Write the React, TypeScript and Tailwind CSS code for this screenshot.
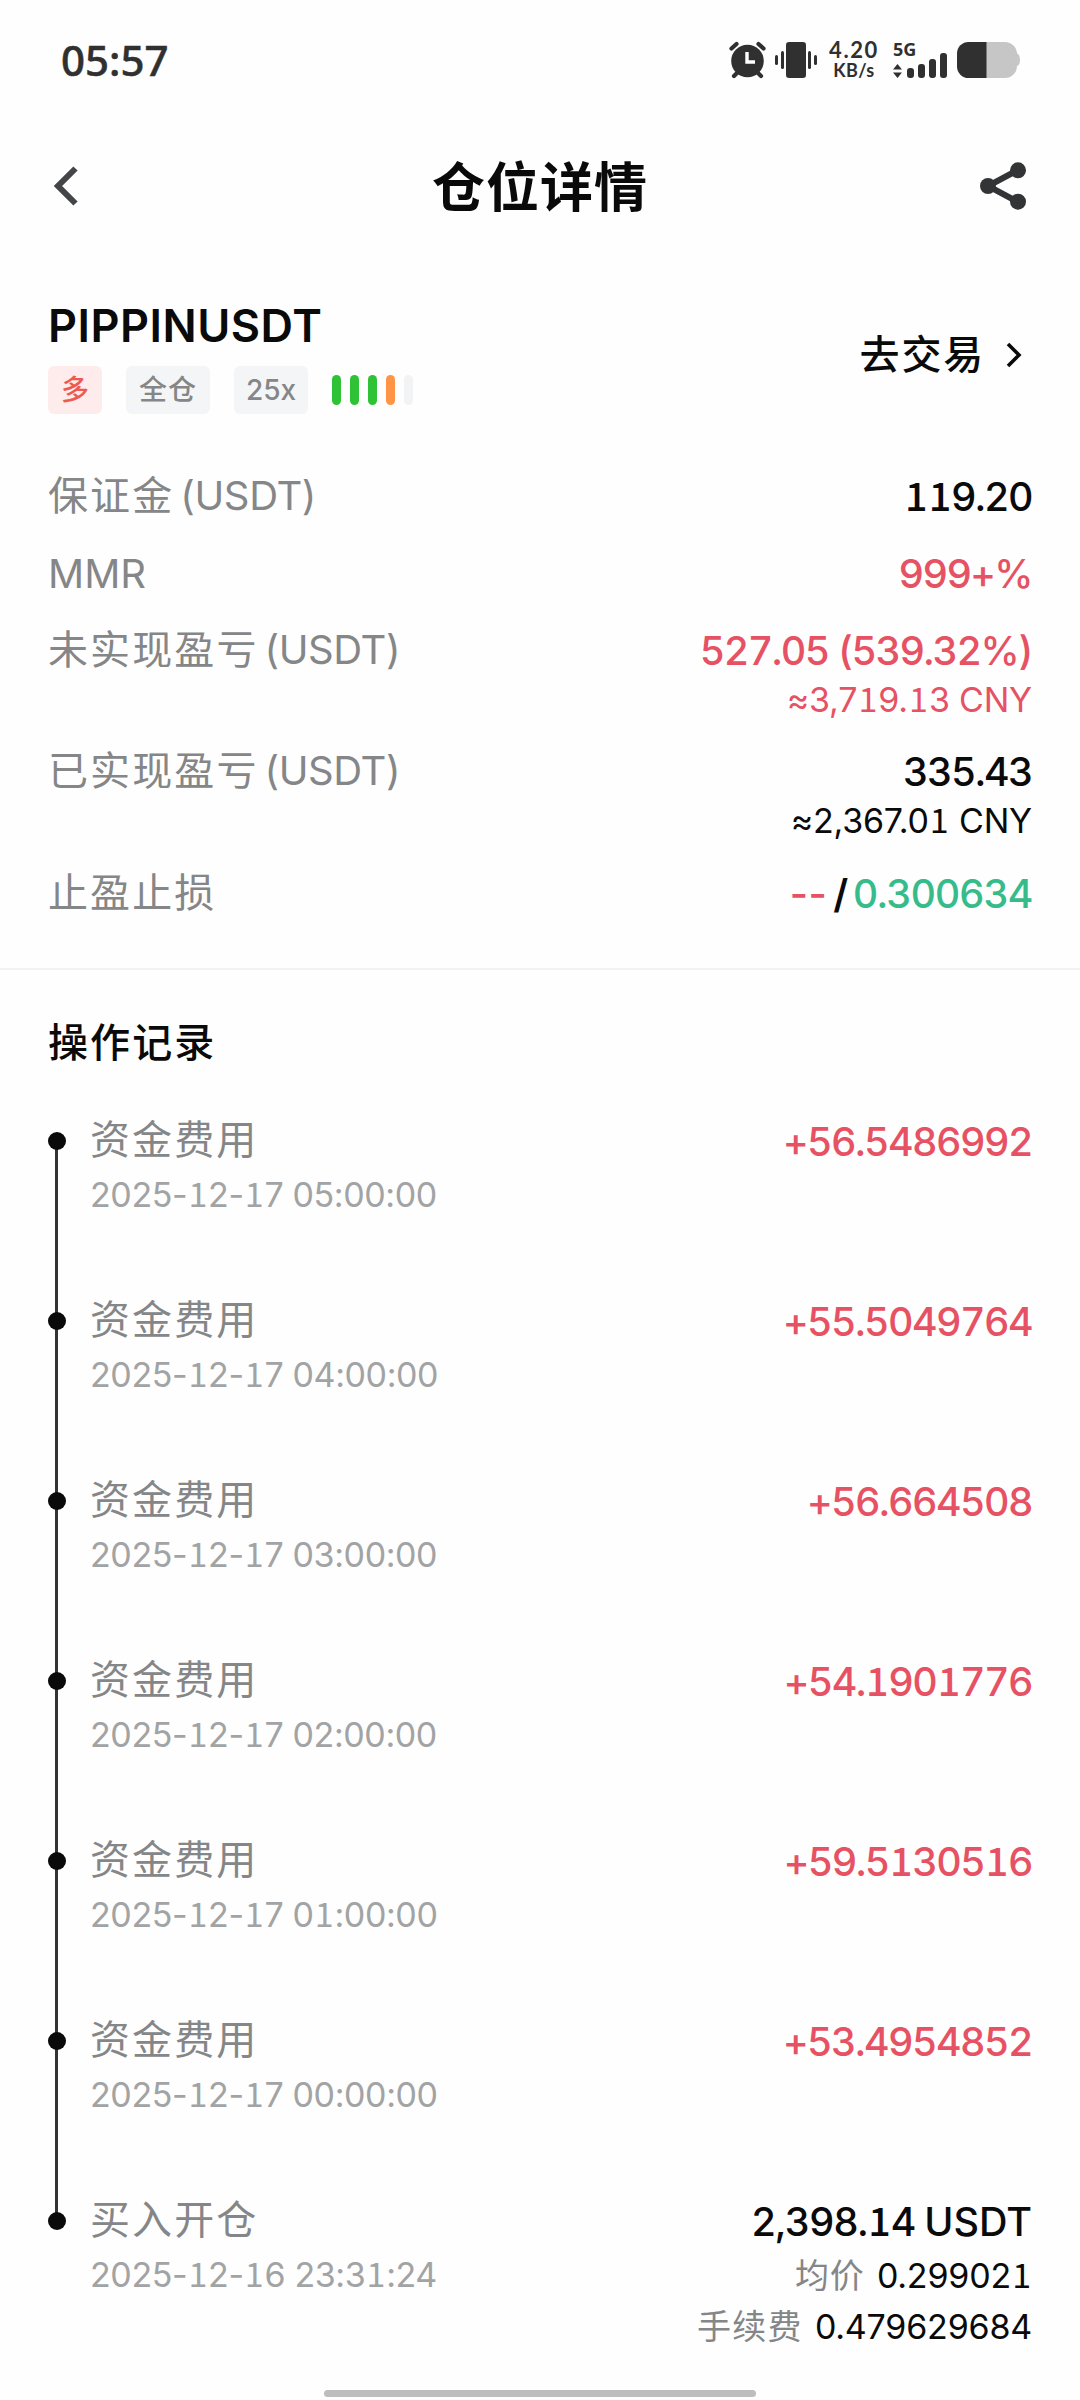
import React from 'react';
import clsx from 'clsx';

const RECORDS = [
  { id: 1, name: '资金费用', time: '2025-12-17 05:00:00', amount: '+56.5486992' },
  { id: 2, name: '资金费用', time: '2025-12-17 04:00:00', amount: '+55.5049764' },
  { id: 3, name: '资金费用', time: '2025-12-17 03:00:00', amount: '+56.664508' },
  { id: 4, name: '资金费用', time: '2025-12-17 02:00:00', amount: '+54.1901776' },
  { id: 5, name: '资金费用', time: '2025-12-17 01:00:00', amount: '+59.5130516' },
  { id: 6, name: '资金费用', time: '2025-12-17 00:00:00', amount: '+53.4954852' },
];

const RISK_BARS = ['bg-[#2fc236]', 'bg-[#2fc236]', 'bg-[#2fc236]', 'bg-[#ff9447]', 'bg-[#f2f3f4]'];

// The "1" is drawn with a foot, so it comes from the CJK face
const Num = ({ children, className }: { children: string; className?: string }) => (
  <span className={clsx('whitespace-nowrap', className)}>
    {children.split(/(1)/).map((part, i) =>
      part === '1' ? (
        <span key={i} className="px-[0.035em] font-['Noto_Sans_CJK_SC',sans-serif] leading-[0]">1</span>
      ) : (
        part
      )
    )}
  </span>
);

const BIG = 'mt-px text-[39.5px] leading-[48px] font-medium tracking-[-1.6px] tabular-nums';
const SMALL = 'text-[34px] leading-[48px] tracking-[-0.2px]';
const TIME = 'text-[34px] leading-[48px] tracking-[-0.4px] text-[#a2a3a4]';
const LABEL = 'text-[40px] leading-[48px] text-[#858687]';

const StatusBar = () => (
  <header className="flex h-[120px] items-center justify-between pr-[60px] pl-[61px] font-['Noto_Sans',sans-serif] text-[#303030]">
    <span className="text-[42px] leading-[48px] font-medium [-webkit-text-stroke:0.5px]">05:57</span>
    <div className="flex h-10 items-start">
      <svg width="92" height="40" viewBox="728 40 92 40" fill="#303030">
        <circle cx="747.5" cy="61" r="16.3" />
        <path d="M731.5 48.5l5-4.5M763.5 48.5l-5-4.5M737 73l-3 3M758 73l3 3" stroke="#303030" strokeWidth="4.2" strokeLinecap="round" />
        <path d="M747 52v10h8" fill="none" stroke="#fff" strokeWidth="3.4" />
        <rect x="786" y="42" width="20" height="36" rx="3" />
        <rect x="781" y="51" width="3" height="18" rx="1.5" />
        <rect x="775" y="55" width="3" height="10" rx="1.5" />
        <rect x="808" y="51" width="3" height="18" rx="1.5" />
        <rect x="814" y="55" width="3" height="10" rx="1.5" />
      </svg>
      <div className="ml-[10px] flex w-[48px] flex-col items-center font-['Lato',sans-serif] font-bold whitespace-nowrap">
        <span className="text-[22px] leading-[20px] tracking-[1.6px]">4.20</span>
        <span className="text-[18px] leading-[20px] tracking-[0.4px]">KB/s</span>
      </div>
      <div className="ml-[14px] flex w-[56px] flex-col">
        <span className="pl-px text-[18px] leading-[18px] font-bold">5G</span>
        <svg className="-mt-1.5" width="56" height="27" viewBox="892 52 56 27" fill="#303030">
          <path d="M897.5 64l4.5 5.5h-9zM897.5 78l4.5-5.5h-9z" />
          <rect x="907" y="68" width="7" height="10" rx="3" />
          <rect x="918" y="64" width="7" height="14" rx="3" />
          <rect x="929" y="59" width="7" height="19" rx="3" />
          <rect x="940" y="53" width="7" height="25" rx="3" />
        </svg>
      </div>
      <svg className="ml-2" width="64" height="40" viewBox="956 40 64 40">
        <path d="M986 42h19a12 12 0 0 1 12 12v12a12 12 0 0 1-12 12h-19zM1016 53q4 1 4 7t-4 6z" fill="#c6c6c6" />
        <path d="M986.5 42h-18a11.5 11.5 0 0 0-11.5 11.5v13a11.5 11.5 0 0 0 11.5 11.5h18z" fill="#303030" />
      </svg>
    </div>
  </header>
);

const TitleBar = () => (
  <div className="flex h-[132px] items-center justify-between pr-[54px] pl-[52px]">
    <div className="w-12">
      <svg width="28" height="44" viewBox="0 0 28 44" fill="none" stroke="#444548" strokeWidth="6">
        <path d="M23.5 4.5L6 22l17.5 17.5" />
      </svg>
    </div>
    <h1 className="pt-[3px] text-[53px] leading-[60px] font-bold tracking-[1px]">仓位详情</h1>
    <svg width="46" height="48" viewBox="0 0 46 48" fill="#333436">
      <path d="M38 8L8 24l30 16" fill="none" stroke="#333436" strokeWidth="6" />
      <circle cx="8" cy="24" r="8" />
      <circle cx="38" cy="8.3" r="8" />
      <circle cx="38" cy="39.7" r="8" />
    </svg>
  </div>
);

const Summary = () => (
  <section className="flex h-[209px] items-start justify-between px-12 pt-[50px]">
    <div>
      <div className="text-[45px] leading-[48px] font-semibold tracking-[0.5px]">PIPPINUSDT</div>
      <div className="mt-4 flex items-center text-[28px] leading-[48px] text-[#858687]">
        <span className="h-12 w-[54px] rounded-md bg-[#feecec] text-center font-medium text-[#ee5a50]">多</span>
        <span className="ml-6 h-12 w-[84px] rounded-md bg-[#f4f5f6] text-center font-medium tracking-[1px]">全仓</span>
        <span className="ml-6 h-12 w-[74px] rounded-md bg-[#f4f5f6] text-center font-medium">25x</span>
        <div className="ml-6 flex gap-[9px]">
          {RISK_BARS.map((color, i) => (
            <span key={i} className={clsx('h-[30px] w-[9px] rounded-full', color)} />
          ))}
        </div>
      </div>
    </div>
    <div className="mt-[29px] flex items-center pr-[9px]">
      <span className="text-[40px] leading-[48px] font-medium tracking-[1.8px]">去交易</span>
      <svg className="ml-5" width="18" height="28" viewBox="0 0 18 28" fill="none" stroke="#0a0a0a" strokeWidth="3.6">
        <path d="M3 3l11 11L3 25" />
      </svg>
    </div>
  </section>
);

type RowProps = { label: string; unit?: string; height: string; children: React.ReactNode };

const Row = ({ label, unit, height, children }: RowProps) => (
  <div className={clsx('flex items-start justify-between', height)}>
    <div className={clsx(LABEL, 'flex')}>
      <span className={label === 'MMR' ? 'pt-px' : 'tracking-[2.1px]'}>{label}</span>
      {unit && <span className="ml-1.5 tracking-[-0.4px]">{unit}</span>}
    </div>
    <div className="flex flex-col items-end">{children}</div>
  </div>
);

export default function App() {
  return (
    <div className="flex h-[2400px] w-[1080px] flex-col overflow-hidden bg-[#fefefe] font-['Inter','Noto_Sans_CJK_SC',sans-serif] text-[#0a0a0a]">
      <StatusBar />
      <TitleBar />
      <Summary />

      {/* Position figures */}
      <section className="h-[509px] border-b-2 border-[#f2f2f3] px-12 pt-[11px]">
        <Row label="保证金" unit="(USDT)" height="h-[77px]">
          <Num className={BIG}>119.20</Num>
        </Row>
        <Row label="MMR" height="h-[77px]">
          <Num className={clsx(BIG, 'text-[#e65263]')}>999+%</Num>
        </Row>
        <Row label="未实现盈亏" unit="(USDT)" height="h-[121px]">
          <Num className={clsx(BIG, 'text-[#e65263]')}>527.05 (539.32%)</Num>
          <Num className={clsx(SMALL, 'mt-px text-[#e65263]')}>≈3,719.13 CNY</Num>
        </Row>
        <Row label="已实现盈亏" unit="(USDT)" height="h-[122px]">
          <Num className={BIG}>335.43</Num>
          <Num className={clsx(SMALL, 'mt-px')}>≈2,367.01 CNY</Num>
        </Row>
        <Row label="止盈止损" height="h-12">
          <div className={clsx(BIG, 'flex gap-[6px]')}>
            <span className="tracking-[0.5px] text-[#e65263] [font-variant-numeric:normal]">--</span>
            <span className="font-semibold">/</span>
            <Num className="tracking-[-1.3px] text-[#36bc8b]">0.300634</Num>
          </div>
        </Row>
      </section>

      {/* Operation history */}
      <section className="px-12 pt-[49px]">
        <h2 className="text-[40px] leading-[48px] font-medium tracking-[2.1px]">操作记录</h2>
        <ul className="pt-[50px]">
          {RECORDS.map(record => (
            <li key={record.id} className="flex h-[180px]">
              <div className="relative w-[42px]">
                <span className="absolute top-[24px] left-[7px] h-[180px] w-[3px] bg-[#333]" />
                <span className="absolute top-[15px] left-0 size-[18px] rounded-full bg-[#0a0a0a]" />
              </div>
              <div className="-mt-px flex flex-1 flex-col gap-[7px]">
                <span className={clsx(LABEL, 'tracking-[2.1px]')}>{record.name}</span>
                <Num className={TIME}>{record.time}</Num>
              </div>
              <Num className={clsx(BIG, 'text-[#e65263]')}>{record.amount}</Num>
            </li>
          ))}
          <li className="flex">
            <div className="relative w-[42px]">
              <span className="absolute top-[15px] left-0 size-[18px] rounded-full bg-[#0a0a0a]" />
            </div>
            <div className="-mt-px flex flex-1 flex-col gap-[7px]">
              <span className={clsx(LABEL, 'tracking-[2.1px]')}>买入开仓</span>
              <Num className={TIME}>2025-12-16 23:31:24</Num>
            </div>
            <div className="flex flex-col items-end">
              <div className={clsx(BIG, 'flex gap-[9px]')}>
                <Num className="tracking-[-1.3px]">2,398.14</Num>
                <span className="tracking-[0px]">USDT</span>
              </div>
              <div className="mt-1.5 flex gap-3">
                <span className="text-[34px] leading-[48px] tracking-[1px] text-[#858687]">均价</span>
                <Num className={SMALL}>0.299021</Num>
              </div>
              <div className="mt-[3px] flex gap-3">
                <span className="text-[34px] leading-[48px] tracking-[1.3px] text-[#858687]">手续费</span>
                <Num className={SMALL}>0.479629684</Num>
              </div>
            </div>
          </li>
        </ul>
      </section>

      <div className="mx-auto mt-auto mb-[3px] h-[7px] w-[432px] shrink-0 rounded-full bg-[#bdbdbd]" />
    </div>
  );
}
